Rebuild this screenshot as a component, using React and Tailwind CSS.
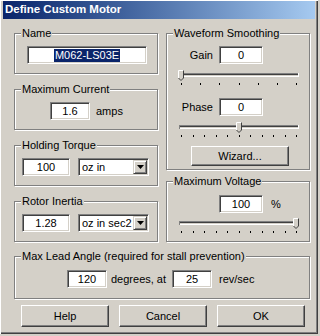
import React from 'react';

const Group = ({ label, className = '', children }) => (
  <div className={`relative border border-[#808080] shadow-[inset_1px_1px_0_#fff,1px_1px_0_#fff] ${className}`}>
    <span className="absolute -top-[7px] left-[6px] bg-[#d4d0c8] px-[1px] leading-[13px] whitespace-nowrap">{label}</span>
    {children}
  </div>
);

const Field = ({ children, className = '' }) => (
  <div
    className={`flex h-[18px] items-center justify-center bg-white border border-t-[#808080] border-l-[#808080] border-b-white border-r-white shadow-[inset_1px_1px_0_#404040,inset_-1px_-1px_0_#d4d0c8] ${className}`}
  >
    {children}
  </div>
);

const Button = ({ children, className = '' }) => (
  <div
    className={`flex items-center justify-center bg-[#d4d0c8] border border-t-white border-l-white border-b-[#404040] border-r-[#404040] shadow-[inset_-1px_-1px_0_#808080] ${className}`}
  >
    {children}
  </div>
);

const Combo = ({ value }) => (
  <div className="flex h-[18px] w-[71px] items-stretch bg-white border border-t-[#808080] border-l-[#808080] border-b-white border-r-white shadow-[inset_1px_1px_0_#404040,inset_-1px_-1px_0_#d4d0c8] p-[1px]">
    <span className="flex-1 pl-[2px] leading-[14px] whitespace-nowrap overflow-hidden">{value}</span>
    <div className="flex w-[14px] items-center justify-center bg-[#d4d0c8] border border-t-[#d4d0c8] border-l-[#d4d0c8] border-b-[#404040] border-r-[#404040] shadow-[inset_1px_1px_0_#fff,inset_-1px_-1px_0_#808080]">
      <svg width="7" height="4" viewBox="0 0 7 4">
        <path d="M0 0h7L3.5 4z" fill="#000" />
      </svg>
    </div>
  </div>
);

// trackbar with ticks underneath, pos from 0 to 1
const Slider = ({ ticks, pos, className = '' }) => {
  const x0 = 3;
  const x1 = 118;
  const tx = Array.from({ length: ticks }, (_, i) => Math.round(x0 + ((x1 - x0) * i) / (ticks - 1)));
  const c = Math.round(x0 + (x1 - x0) * pos);
  return (
    <svg width="124" height="16" viewBox="0 0 124 16" className={`block ${className}`}>
      <rect x="1" y="3" width="120" height="1" fill="#808080" />
      <rect x="1" y="4" width="120" height="1" fill="#404040" />
      <rect x="1" y="5" width="120" height="1" fill="#d4d0c8" />
      <rect x="1" y="6" width="120" height="1" fill="#fff" />
      <rect x="1" y="3" width="1" height="4" fill="#808080" />
      <rect x="120" y="3" width="1" height="4" fill="#fff" />
      <path d={`M${c - 2.5} 0.5h5v7.5l-2.5 2.5l-2.5 -2.5z`} fill="#d4d0c8" />
      <path d={`M${c - 2.5} 8V0.5h5`} stroke="#fff" fill="none" />
      <path d={`M${c + 2.5} 0.5v7.5l-2.5 2.5`} stroke="#404040" fill="none" />
      <path d={`M${c - 2.5} 8l2.5 2.5`} stroke="#404040" fill="none" />
      {tx.map((x) => (
        <rect key={x} x={x} y="13" width="1" height="2" fill="#000" />
      ))}
    </svg>
  );
};

export default function App() {
  return (
    <div className="h-[336px] w-[320px] bg-[#d4d0c8] font-['Liberation_Sans',Arial,sans-serif] text-[11px] text-black">
      <div className="h-[334px] w-[318px] px-[3px] pt-[1px] shadow-[inset_1px_1px_0_#fff,inset_-1px_-1px_0_#404040,inset_-2px_-2px_0_#808080]">
        <div className="flex h-[18px] items-center bg-gradient-to-r from-[#0a246a] to-[#a6caf0] pl-[2px] text-[11.5px] font-bold text-white">
          Define Custom Motor
        </div>

        <div className="pl-[11px] pt-[14px]">
          <div className="flex gap-[8px]">
            <div className="flex w-[144px] flex-col gap-[15px]">
              <Group label="Name" className="h-[41px] pl-[12px] pt-[12px]">
                <Field className="w-[120px]">
                  <span className="bg-[#0a246a] px-[1px] leading-[13px] text-white">M062-LS03E</span>
                </Field>
              </Group>
              <Group label="Maximum Current" className="flex h-[41px] items-start pl-[35px] pt-[12px]">
                <Field className="w-[40px]">1.6</Field>
                <span className="ml-[6px] leading-[18px]">amps</span>
              </Group>
              <Group label="Holding Torque" className="flex h-[41px] items-start gap-[8px] pl-[7px] pt-[12px]">
                <Field className="w-[48px]">100</Field>
                <Combo value="oz in" />
              </Group>
              <Group label="Rotor Inertia" className="flex h-[41px] items-start gap-[8px] pl-[7px] pt-[12px]">
                <Field className="w-[48px]">1.28</Field>
                <Combo value="oz in sec2" />
              </Group>
            </div>

            <div className="flex w-[144px] flex-col gap-[11px]">
              <Group label="Waveform Smoothing" className="h-[137px] pt-[12px]">
                <div className="flex items-center">
                  <span className="w-[46px] text-right">Gain</span>
                  <Field className="ml-[6px] w-[44px]">0</Field>
                </div>
                <Slider ticks={7} pos={0} className="ml-[11px] mt-[6px]" />
                <div className="mt-[12px] flex items-center">
                  <span className="w-[46px] text-right">Phase</span>
                  <Field className="ml-[6px] w-[44px]">0</Field>
                </div>
                <Slider ticks={11} pos={0.5} className="ml-[11px] mt-[6px]" />
                <Button className="ml-[24px] mt-[8px] h-[20px] w-[98px]">Wizard...</Button>
              </Group>
              <Group label="Maximum Voltage" className="h-[61px] pt-[13px]">
                <div className="flex items-center pl-[52px]">
                  <Field className="w-[44px]">100</Field>
                  <span className="ml-[8px]">%</span>
                </div>
                <Slider ticks={11} pos={1} className="ml-[11px] mt-[5px]" />
              </Group>
            </div>
          </div>

          <Group label="Max Lead Angle (required for stall prevention)" className="mt-[14px] flex h-[43px] w-[296px] items-center pl-[52px] pt-[13px] items-start">
            <Field className="w-[40px]">120</Field>
            <span className="ml-[4px] w-[61px] leading-[18px]">degrees, at</span>
            <Field className="w-[40px]">25</Field>
            <span className="ml-[7px] leading-[18px]">rev/sec</span>
          </Group>

          <div className="mt-[6px] flex gap-[10px] pl-[7px]">
            <Button className="h-[22px] w-[88px]">Help</Button>
            <Button className="h-[22px] w-[88px]">Cancel</Button>
            <Button className="h-[22px] w-[88px]">OK</Button>
          </div>
        </div>
      </div>
    </div>
  );
}
